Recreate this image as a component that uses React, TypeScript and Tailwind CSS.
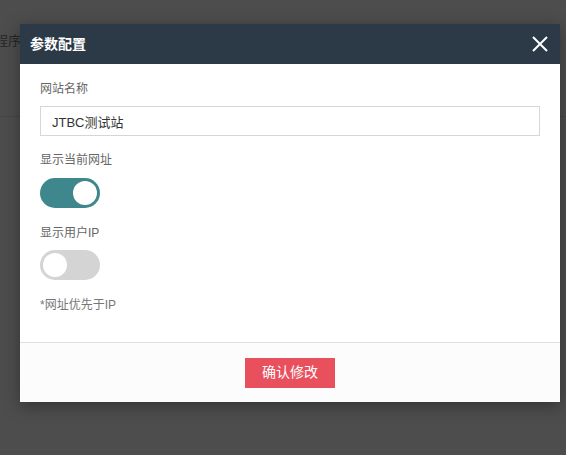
import React, { useState } from "react";

const font = { fontFamily: '"Liberation Sans", Arial, "Noto Sans CJK SC", sans-serif' };

function Toggle({ on, onChange }: { on: boolean; onChange: () => void }) {
  return (
    <button
      type="button"
      onClick={onChange}
      className={`relative block w-[60px] h-[30px] rounded-full ${on ? "bg-[#3e878c]" : "bg-[#d4d4d4]"}`}
    >
      <span
        className={`absolute top-[3px] w-[24px] h-[24px] rounded-full bg-white ${on ? "left-[33px]" : "left-[3px]"}`}
      />
    </button>
  );
}

export default function App() {
  const [showUrl, setShowUrl] = useState(true);
  const [showIp, setShowIp] = useState(false);
  const [name, setName] = useState("JTBC测试站");

  return (
    <div className="relative w-[566px] h-[455px] overflow-hidden bg-[#4d4d4d]" style={font}>
      {/* dimmed page behind the modal */}
      <div className="flex flex-col">
        <div className="h-[78px] pt-[31px] ml-[-5px] text-[13px] text-[#262626] whitespace-nowrap">程序</div>
        <div className="h-[39px] border-b border-[#454545]" />
      </div>

      {/* modal */}
      <div className="absolute left-[20px] top-[24px] w-[540px] flex flex-col bg-white shadow-[0_4px_16px_rgba(0,0,0,0.35)]">
        <div className="h-[40px] flex items-center justify-between bg-[#2c3947] pl-[10px] pr-[12px]">
          <span className="text-[14px] font-bold text-white">参数配置</span>
          <svg width="16" height="16" viewBox="0 0 16 16" fill="none" stroke="white" strokeWidth="2">
            <path d="M1 1 L15 15 M15 1 L1 15" />
          </svg>
        </div>

        <div className="flex flex-col px-[20px] pt-[15px] pb-[27px]">
          <div className="h-[20px] leading-[20px] text-[12px] text-[#666]">网站名称</div>
          <input
            value={name}
            onChange={(e) => setName(e.target.value)}
            className="mt-[7px] h-[30px] w-full border border-[#d6d6d6] px-[11px] text-[13px] text-[#333] outline-none"
            style={font}
          />
          <div className="mt-[14px] h-[20px] leading-[20px] text-[12px] text-[#666]">显示当前网址</div>
          <div className="mt-[8px]">
            <Toggle on={showUrl} onChange={() => setShowUrl(!showUrl)} />
          </div>
          <div className="mt-[15px] h-[20px] leading-[20px] text-[12px] text-[#666]">显示用户IP</div>
          <div className="mt-[7px]">
            <Toggle on={showIp} onChange={() => setShowIp(!showIp)} />
          </div>
          <div className="mt-[15px] h-[20px] leading-[20px] text-[12px] text-[#777]">*网址优先于IP</div>
        </div>

        <div className="h-[60px] flex items-center justify-center border-t border-[#e0e0e0] bg-[#fcfcfc]">
          <button type="button" className="w-[90px] h-[30px] bg-[#e8505d] text-[14px] text-white">
            确认修改
          </button>
        </div>
      </div>
    </div>
  );
}
